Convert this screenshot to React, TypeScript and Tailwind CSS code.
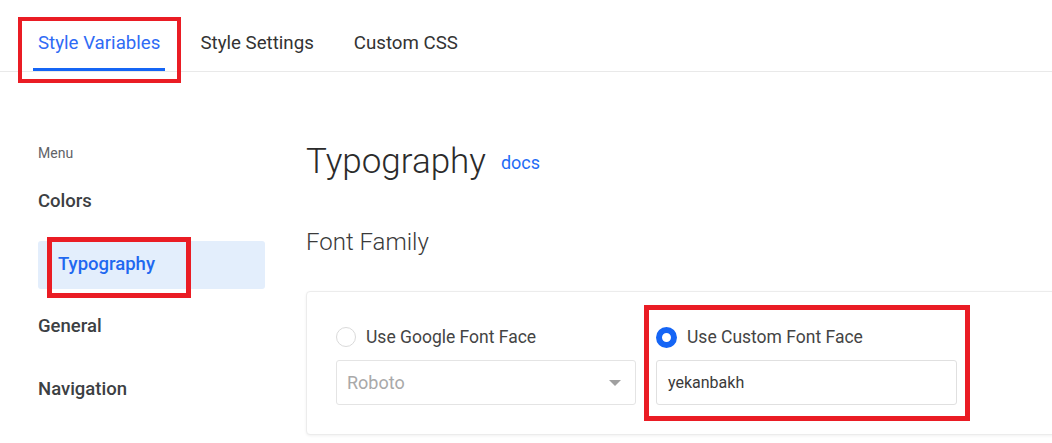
const tabs = ["Style Variables", "Style Settings", "Custom CSS"];
const menu = ["Colors", "Typography", "General", "Navigation"];

export default function App() {
  return (
    <div className="relative w-[1052px] h-[443px] overflow-hidden bg-white font-['Roboto',sans-serif] text-[#3c4043]">
      {/* Tabs */}
      <div className="flex h-[72px] gap-[30px] border-b border-[#e9e9e9] pl-[33px]">
        {tabs.map((t, i) => (
          <div key={t} className="flex h-full flex-col justify-end">
            <span
              className={`mb-[14px] px-[5px] text-[18.7px] leading-[21px] ${
                i === 0 ? "text-[#2f6bf5]" : "text-[#333]"
              }`}
            >
              {t}
            </span>
            <div className={`h-[3px] ${i === 0 ? "bg-[#1565f5]" : "bg-transparent"}`} />
          </div>
        ))}
      </div>

      <div className="flex">
        {/* Sidebar */}
        <div className="w-[265px] shrink-0 pl-[38px] pt-[71px]">
          <div className="text-[14px] leading-[20px] text-[#5f6368]">Menu</div>
          <div className="mt-[15px] flex flex-col gap-[14.5px]">
            {menu.map((m) => {
              const active = m === "Typography";
              return (
                <div
                  key={m}
                  className={`flex h-[48px] items-center rounded-[3px] text-[18.5px] font-medium ${
                    active ? "bg-[#e3eefc] px-[20px] text-[#1f68f0]" : "text-[#3c4043]"
                  }`}
                >
                  {m}
                </div>
              );
            })}
          </div>
        </div>

        {/* Main */}
        <div className="ml-[41px] shrink-0 pt-[68px]">
          <div className="flex items-center gap-[15px]">
            <h1 className="text-[35px] font-light leading-[44px] text-[#2b2b2b]">Typography</h1>
            <a className="text-[18px] text-[#1f6df5]">docs</a>
          </div>
          <h2 className="mt-[43px] text-[24px] font-light leading-[30px] text-[#3a3a3a]">Font Family</h2>

          <div className="mt-[34px] w-[780px] rounded-[4px] border border-[#ececec] bg-white pl-[29px] pt-[34px] pb-[29px] shadow-[0_1px_3px_rgba(0,0,0,0.06)]">
            <div className="flex gap-[20px]">
              <div className="w-[300px]">
                <label className="flex h-[22px] items-center gap-[10px] text-[17.5px] text-[#444]">
                  <span className="h-[20px] w-[20px] rounded-full border-[1.5px] border-[#dadada] bg-white" />
                  Use Google Font Face
                </label>
                <div className="mt-[12px] flex h-[45px] items-center justify-between rounded-[3px] border border-[#e4e4e4] pl-[10px] pr-[14px] text-[18px] text-[#a9a9a9]">
                  <span>Roboto</span>
                  <svg width="12" height="6" viewBox="0 0 12 6">
                    <path d="M0 0h12L6 6z" fill="#a0a0a0" />
                  </svg>
                </div>
              </div>
              <div className="w-[301px]">
                <label className="flex h-[22px] items-center gap-[10px] text-[17.5px] text-[#444]">
                  <span className="h-[21px] w-[21px] rounded-full border-[6px] border-[#1565f5] bg-white" />
                  Use Custom Font Face
                </label>
                <div className="mt-[12px] flex h-[45px] items-center rounded-[3px] border border-[#e0e0e0] px-[11px] text-[16px] text-[#3a3a3a]">
                  yekanbakh
                </div>
              </div>
            </div>
          </div>
        </div>
      </div>

      {/* Annotation boxes */}
      <div className="absolute left-[18px] top-[17px] h-[66px] w-[163px] border-[4px] border-[#ea1c24]" />
      <div className="absolute left-[47px] top-[237px] h-[61px] w-[144px] border-[5px] border-[#ea1c24]" />
      <div className="absolute left-[644px] top-[305px] h-[116px] w-[326px] border-[5px] border-[#ea1c24]" />
    </div>
  );
}
